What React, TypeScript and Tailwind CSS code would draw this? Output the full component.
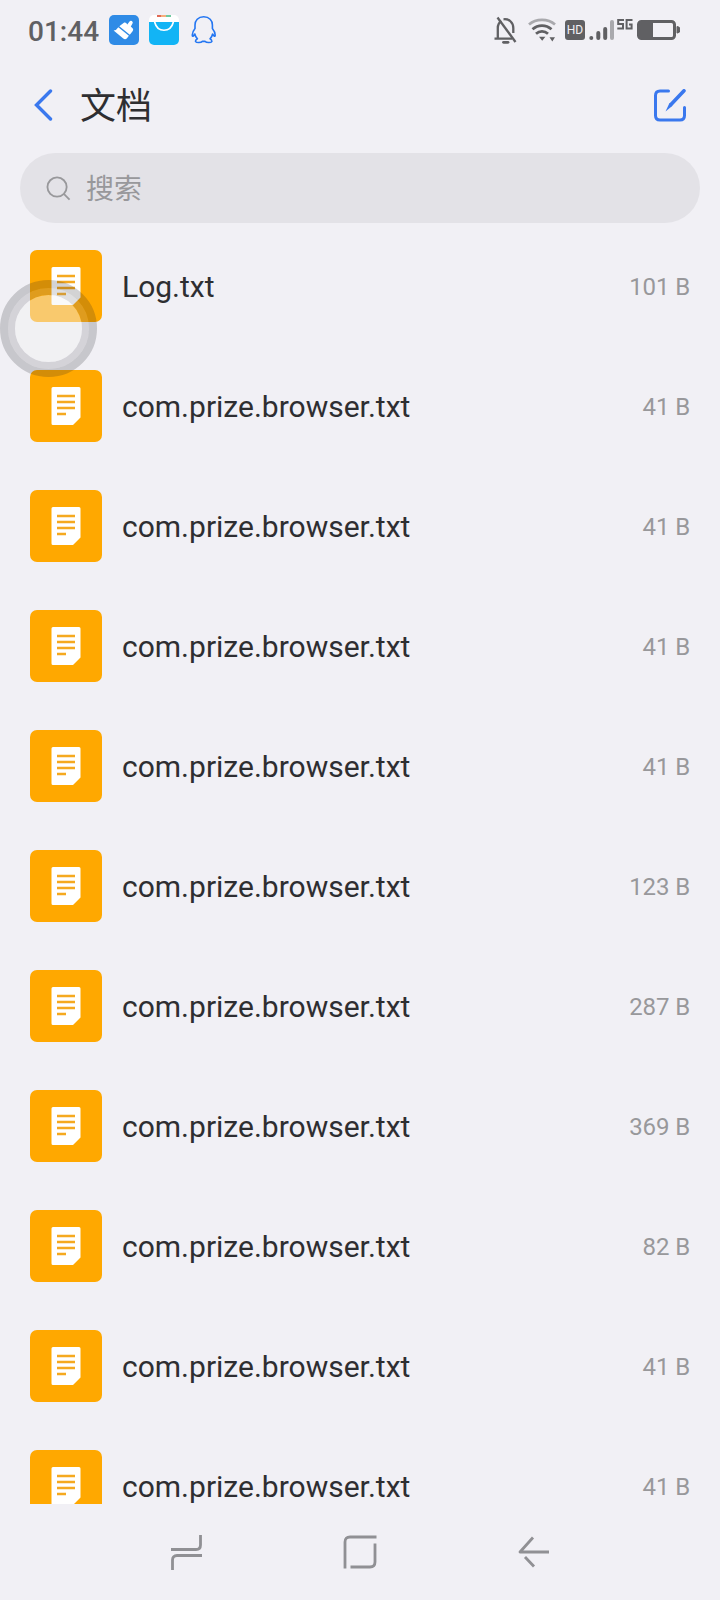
import React from 'react';

const files = [
  { name: 'Log.txt', size: '101 B' },
  { name: 'com.prize.browser.txt', size: '41 B' },
  { name: 'com.prize.browser.txt', size: '41 B' },
  { name: 'com.prize.browser.txt', size: '41 B' },
  { name: 'com.prize.browser.txt', size: '41 B' },
  { name: 'com.prize.browser.txt', size: '123 B' },
  { name: 'com.prize.browser.txt', size: '287 B' },
  { name: 'com.prize.browser.txt', size: '369 B' },
  { name: 'com.prize.browser.txt', size: '82 B' },
  { name: 'com.prize.browser.txt', size: '41 B' },
  { name: 'com.prize.browser.txt', size: '41 B' },
];

const StatusBar: React.FC = () => (
  <div className="h-15 pl-7 pr-10 flex items-center justify-between text-[#606063]">
    <div className="flex items-center">
      <span className="w-[81px] text-[28px] leading-none font-medium pt-[3px]">01:44</span>
      {/* cleaner */}
      <svg width="30" height="30" viewBox="0 0 30 30">
        <rect width="30" height="30" rx="5" fill="#2f8be6" />
        <path d="M10.3 11.3 15.2 7.6Q16.2 7 17.2 8L18.3 9.4 20.5 6.4Q22.3 5 23.8 7.2 24 8.2 21.8 11.4L23.8 13.6Q24.8 15 23.6 16.2L20.8 19.8Z" fill="#fff" />
        <path d="M9.3 12.2 19.9 20.8 17.8 23.4Q16 25 14 23.2L4.6 15.6Q7.6 15.2 9.3 12.2Z" fill="#fff" />
      </svg>
      {/* app store */}
      <svg className="ml-2.5" width="30" height="30" viewBox="0 0 30 30">
        <rect width="30" height="30" rx="5" fill="#fff" />
        <path d="M0 7H30V25a5 5 0 0 1-5 5H5a5 5 0 0 1-5-5Z" fill="#12b4f5" />
        <path d="M8 1H12" stroke="#e06a55" strokeWidth="2" />
        <path d="M12 1H17" stroke="#f7ae7c" strokeWidth="2" />
        <path d="M17 1H22" stroke="#6fc9a0" strokeWidth="2" />
        <path d="M5.8 6.6V7.5C8.5 17.8 21.5 17.8 24.2 7.5V6.6" fill="none" stroke="#fff" strokeWidth="1.7" />
      </svg>
      {/* penguin */}
      <svg className="ml-3" width="26" height="30" viewBox="0 0 26 30" fill="none" stroke="#2476f2" strokeWidth="1.6" strokeLinejoin="round">
        <path d="M12.7 1.8C7 1.8 4 5.6 4 10V13.4C2.2 15.6 1 18.4 1.4 21C1.7 21.8 3 20.4 3.8 19C4.2 21 5.2 22.6 6.4 23.8C4.8 24.7 4.3 25.5 4.6 26.6C5.6 28 10 27.8 11.4 26.4H14C15.6 27.8 19.8 28 20.8 26.6C21 25.5 20.6 24.7 19 23.8C20.3 22.6 21.2 21 21.6 19C22.4 20.4 23.8 21.8 24.1 21C24.4 18.4 23.2 15.6 21.4 13.4V10C21.4 5.6 18.4 1.8 12.7 1.8Z" />
      </svg>
    </div>

    <div className="flex items-center">
      {/* muted bell */}
      <svg width="24" height="28" viewBox="0 0 24 28" fill="none" stroke="currentColor" strokeWidth="2.3">
        <path d="M.5 22.7H18M3.8 22V12C3.8 9 5 6.6 7.3 5M9.5 3.3C15.5 2.6 19.3 7 19.3 12V17" />
        <path d="M3.5 1.5 21.5 26" />
        <path d="M9.5 26.3H14" strokeWidth="2.8" strokeLinecap="round" />
      </svg>
      <svg className="ml-2.5" width="28" height="24" viewBox="0 0 28 24" fill="none" stroke="currentColor" strokeWidth="2.7">
        <path d="M1 6.5C8 .2 20 .2 27 6.5" stroke="#a9a9ad" />
        <path d="M4.5 11.3C10 6.3 18 6.3 23.5 11.3" />
        <path d="M8 15.8C11.5 12.6 16.5 12.6 20 15.8" />
        <path d="M11 18.8H17.4L14.2 22.8ZM21.5 19.2H27L24.3 23.5Z" fill="currentColor" stroke="none" />
      </svg>
      <div className="ml-[9px] w-5 h-5 rounded-[3px] bg-[#606063] text-[#f1f0f5] text-xs leading-[21px] text-center">HD</div>
      <svg className="ml-1" width="26" height="22" viewBox="0 0 26 22" fill="none" stroke="currentColor" strokeWidth="4" strokeLinecap="round">
        <path d="M2.3 19V19.1M9.3 14V19M16.2 10V19" />
        <path d="M23 3V19" stroke="#a9a9ad" />
      </svg>
      <svg className="ml-0.5 mb-[11px]" width="17" height="11" viewBox="0 0 17 11" fill="none" stroke="currentColor" strokeWidth="2">
        <path d="M7 1H1.2V5H6V9.5H.3M15.5 1H9.6V9.5H14.6V5.5H12" />
      </svg>
      <svg className="ml-[3px]" width="43" height="20" viewBox="0 0 43 20">
        <rect x="1.5" y="1.5" width="36" height="17" rx="3" fill="none" stroke="currentColor" strokeWidth="3" />
        <path d="M2 2H16V18H2Z" fill="currentColor" />
        <path d="M40 6.5a3 3.3 0 0 1 0 6.6Z" fill="currentColor" stroke="currentColor" />
      </svg>
    </div>
  </div>
);

const FileIcon: React.FC = () => (
  <div className="w-[72px] h-[72px] shrink-0 rounded-[7px] bg-[#ffa800]">
    <svg width="72" height="72" viewBox="0 0 72 72">
      <path d="M22.5 17H49a1.5 1.5 0 0 1 1.5 1.5V47.5L43 55H23a1.5 1.5 0 0 1-1.5-1.5V18.5A1.5 1.5 0 0 1 23 17Z" fill="#fff" />
      <path d="M27 26H45M27 32H45M27 38H45M27 44H36" stroke="#f5a91f" strokeWidth="2.3" />
    </svg>
  </div>
);

const FloatingButton: React.FC = () => (
  <div className="absolute left-0 top-[280px] w-[97px] h-[97px] rounded-full border-[8px] border-[#232328]/20">
    <div className="w-full h-full rounded-full border-[7px] border-[#78787d]/24">
      <div className="w-full h-full rounded-full bg-[#f2f2f2]/45" />
    </div>
  </div>
);

const NavBar: React.FC = () => (
  <div className="h-24 flex items-center justify-between px-[170px] pb-px text-[#909094]">
    <svg width="33" height="36" viewBox="0 0 33 36" fill="none" stroke="currentColor" strokeWidth="2.8">
      <path d="M1 15.5H26Q30.5 15.5 30.5 11V1M32 21.5H7Q2.5 21.5 2.5 26V36" />
    </svg>
    <svg className="mr-0.5" width="34" height="34" viewBox="0 0 34 34" fill="none" stroke="currentColor" strokeWidth="2.8">
      <path d="M33.5 2H7Q2 2 2 7V33.5M32 8.5V27Q32 32 27 32H7.5" />
    </svg>
    <svg width="32" height="34" viewBox="0 0 32 34" fill="none" stroke="currentColor" strokeWidth="2.8" strokeLinejoin="round">
      <path d="M31 17H2L15 2.5M7 22 16 31.5" />
    </svg>
  </div>
);

export default function App() {
  return (
    <div className="relative w-[720px] h-[1600px] overflow-hidden flex flex-col bg-[#f1f0f5] font-[Roboto,'Noto_Sans_CJK_SC',sans-serif]">
      <StatusBar />

      <div className="h-[93px] pl-[34px] pr-[34px] pb-[3px] flex items-center">
        <svg width="19" height="32" viewBox="0 0 19 32" fill="none" stroke="#3a78ee" strokeWidth="3.4" strokeLinecap="round">
          <path d="M16.5 2 2.5 16 16.5 30" />
        </svg>
        <h1 className="ml-[27px] pt-[3px] text-[36px] leading-none text-[#2e2e31]">文档</h1>
        <svg className="ml-auto" width="32" height="33" viewBox="0 0 32 33" fill="none" stroke="#3a78ee" strokeWidth="3" strokeLinecap="round">
          <path d="M14.5 2H6Q1.5 2 1.5 6.5V26.5Q1.5 31 6 31H26Q30.5 31 30.5 26.5V18.5" />
          <path d="M30 1.8 17 15.5" strokeWidth="3.6" />
          <path d="M15.5 14 18.5 16.8 11.5 22.5Z" fill="#3a78ee" stroke="none" />
        </svg>
      </div>

      <div className="mx-5 h-[70px] rounded-full bg-[#e3e2e7] pl-[26px] flex items-center text-[#98989b]">
        <svg width="25" height="25" viewBox="0 0 26 26" fill="none" stroke="currentColor" strokeWidth="1.9">
          <circle cx="11.5" cy="11.5" r="10" />
          <path d="M18.8 18.8 24.5 24.5" />
        </svg>
        <span className="ml-[15px] pt-[3px] text-[28px] leading-none">搜索</span>
      </div>

      <div className="mt-[3px] h-[1278px] overflow-hidden">
        {files.map((file, index) => (
          <div key={index} className="h-[120px] px-[30px] flex items-center">
            <FileIcon />
            <span className="ml-5 text-[30px] text-[#2e2e31]">{file.name}</span>
            <span className="ml-auto pt-0.5 text-2xl tracking-[-0.1px] text-[#98989b]">{file.size}</span>
          </div>
        ))}
      </div>

      <NavBar />
      <FloatingButton />
    </div>
  );
}
